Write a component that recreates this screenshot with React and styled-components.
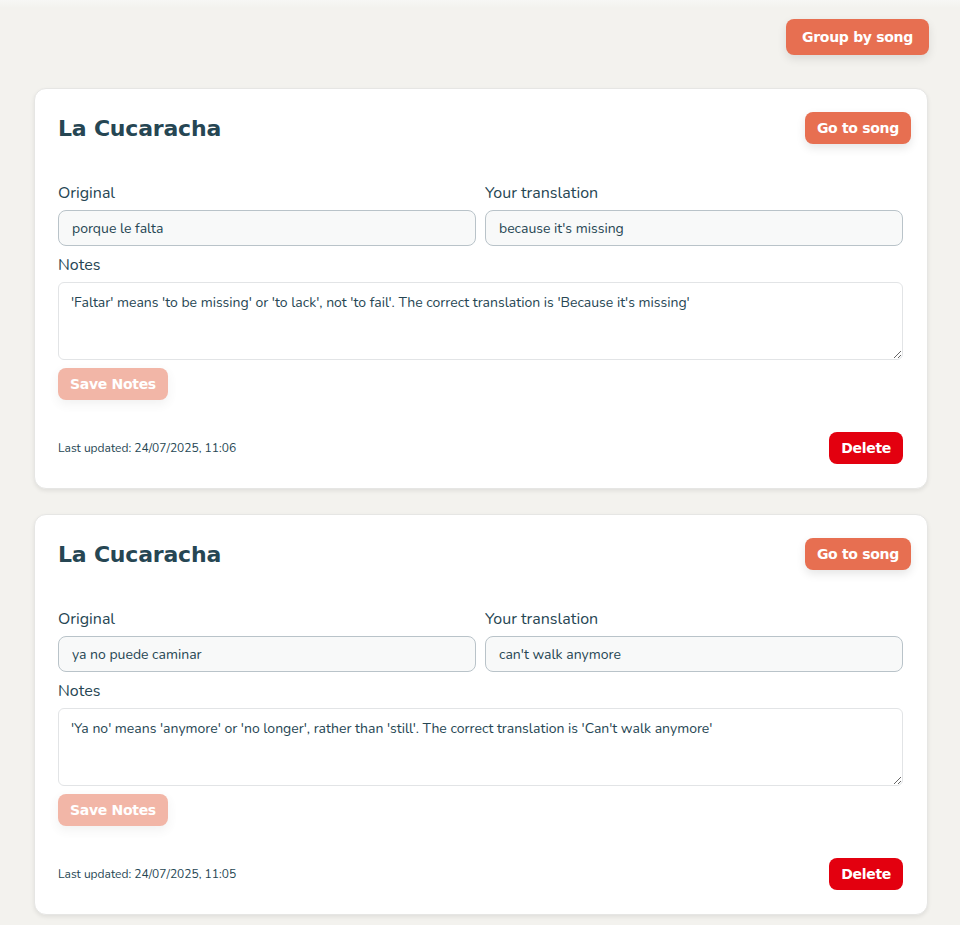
import React from 'react'
import styled, { createGlobalStyle } from 'styled-components'

const GlobalStyle = createGlobalStyle`
  body {
    margin: 0;
    background: #f3f2ee;
    font-family: "Nunito", "Lato", "Open Sans", sans-serif;
    color: #264653;
  }
`

const entries = [
  {
    id: 1,
    song: 'La Cucaracha',
    original: 'porque le falta',
    translation: "because it's missing",
    notes: "'Faltar' means 'to be missing' or 'to lack', not 'to fail'. The correct translation is 'Because it's missing'",
    updated: '24/07/2025, 11:06',
  },
  {
    id: 2,
    song: 'La Cucaracha',
    original: 'ya no puede caminar',
    translation: "can't walk anymore",
    notes: "'Ya no' means 'anymore' or 'no longer', rather than 'still'. The correct translation is 'Can't walk anymore'",
    updated: '24/07/2025, 11:05',
  },
]

function Entry({ entry }) {
  return (
    <Card>
      <CardHeader>
        <SongTitle>{entry.song}</SongTitle>
        <Button>Go to song</Button>
      </CardHeader>

      <FieldGrid>
        <Field>
          <Label>Original</Label>
          <Input readOnly value={entry.original} />
        </Field>
        <Field>
          <Label>Your translation</Label>
          <Input readOnly value={entry.translation} />
        </Field>
      </FieldGrid>

      <Field>
        <Label>Notes</Label>
        <Notes defaultValue={entry.notes} />
      </Field>

      <Button disabled>Save Notes</Button>

      <CardFooter>
        <Updated>Last updated: {entry.updated}</Updated>
        <Button danger>Delete</Button>
      </CardFooter>
    </Card>
  )
}

export default function App() {
  return (
    <>
      <GlobalStyle />
      <Page>
        <Toolbar>
          <Button large>Group by song</Button>
        </Toolbar>
        <List>
          {entries.map(e => <Entry key={e.id} entry={e} />)}
        </List>
      </Page>
    </>
  )
}

const Page = styled.div`
  padding: 19px 31px 24px 34px;
  background: linear-gradient(#f7f7f5, #f3f2ee 8px);
  min-height: 100vh;
  box-sizing: border-box;
`

const Toolbar = styled.div`
  display: flex;
  justify-content: flex-end;
  margin-bottom: 33px;
`

const List = styled.div`
  display: flex;
  flex-direction: column;
  gap: 25px;
  padding-right: 1px;
`

const Card = styled.div`
  background: #fff;
  border: 1px solid #e6e6e4;
  border-radius: 12px;
  box-shadow: 0 2px 4px rgba(0, 0, 0, 0.08);
  padding: 23px 24px 24px 23px;
  display: flex;
  flex-direction: column;
  align-items: flex-start;
`

const CardHeader = styled.div`
  align-self: stretch;
  display: flex;
  justify-content: space-between;
  align-items: center;
  margin-right: -8px;
  margin-bottom: 38px;
`

const SongTitle = styled.h2`
  margin: 0;
  font-family: "Fredoka One", "DejaVu Sans", sans-serif;
  font-weight: 700;
  font-size: 22px;
  letter-spacing: -0.2px;
  color: #264653;
`

const FieldGrid = styled.div`
  align-self: stretch;
  display: grid;
  grid-template-columns: 1fr 1fr;
  gap: 9px;
  margin-bottom: 8px;
`

const Field = styled.div`
  align-self: stretch;
  display: flex;
  flex-direction: column;
  gap: 6px;
`

const Label = styled.label`
  font-size: 16px;
  line-height: 22px;
  color: #264653;
`

const Input = styled.input`
  height: 36px;
  box-sizing: border-box;
  padding: 0 13px;
  border: 1px solid #b9c3c9;
  border-radius: 8px;
  background: #f8f9f9;
  font-family: inherit;
  font-size: 14px;
  color: #264653;
  outline: none;
`

const Notes = styled.textarea`
  height: 78px;
  box-sizing: border-box;
  padding: 11px 12px;
  border: 1px solid #e2e4e6;
  border-radius: 6px;
  background: #fff;
  font-family: inherit;
  font-size: 14px;
  line-height: 18px;
  color: #264653;
  outline: none;
  resize: vertical;
  margin-bottom: 8px;
`

const Button = styled.button`
  border: none;
  border-radius: 8px;
  height: ${p => (p.large ? '36px' : '32px')};
  padding: 0 ${p => (p.large ? '16px' : '12px')};
  background: ${p => (p.danger ? '#e3000f' : '#e76f51')};
  color: #fff;
  font-family: "Fredoka One", "DejaVu Sans", sans-serif;
  font-weight: 700;
  font-size: 14px;
  letter-spacing: -0.3px;
  box-shadow: ${p => (p.danger ? 'none' : '0 4px 10px rgba(0, 0, 0, 0.1)')};
  cursor: pointer;

  &:disabled {
    opacity: 0.5;
    cursor: default;
  }
`

const CardFooter = styled.div`
  align-self: stretch;
  display: flex;
  justify-content: space-between;
  align-items: center;
  margin-top: 32px;
`

const Updated = styled.span`
  font-size: 12px;
  color: #264653;
`
